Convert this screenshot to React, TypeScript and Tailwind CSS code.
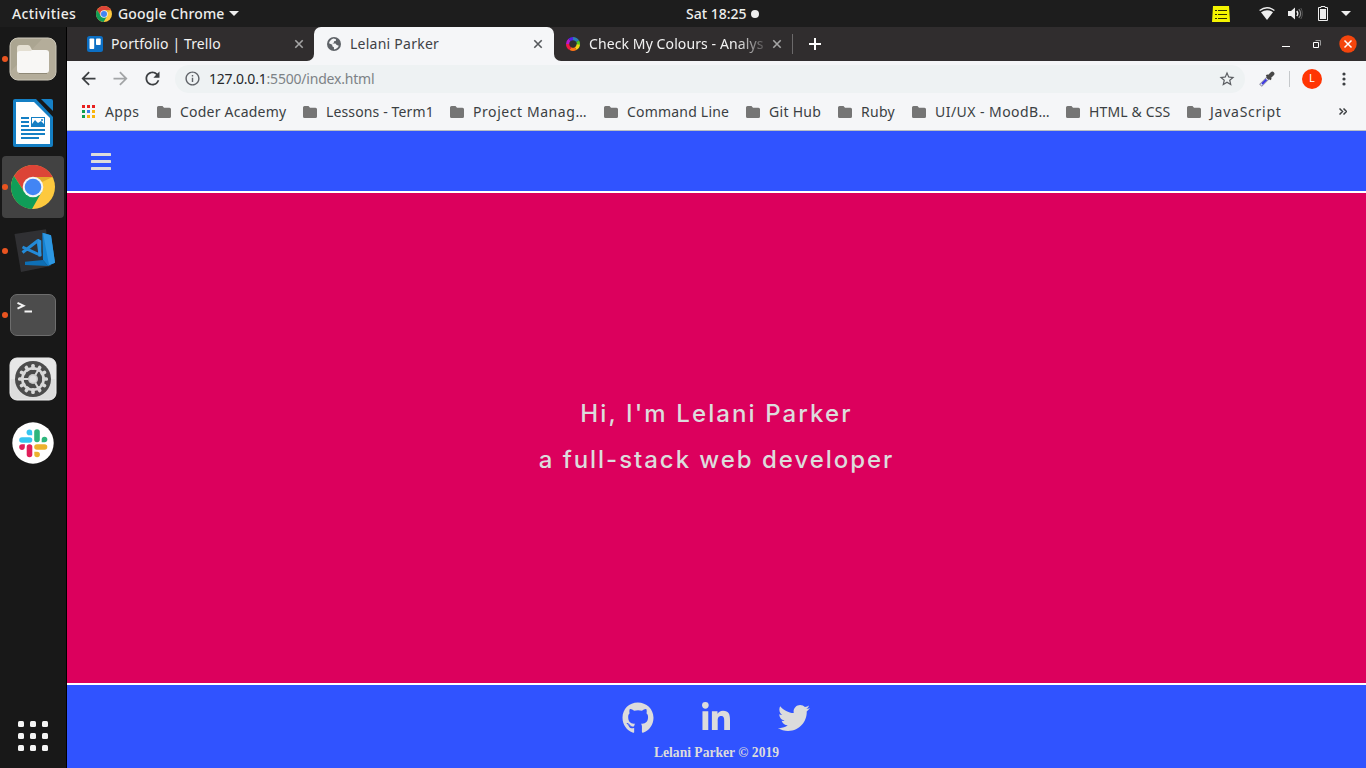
import React from "react";
import { FaGithub, FaLinkedinIn, FaTwitter } from "react-icons/fa";
import { MdArrowBack, MdArrowForward, MdRefresh, MdInfoOutline, MdStarBorder } from "react-icons/md";

function ChromeLogo({ className }: { className: string }) {
  return (
    <svg viewBox="2 2 44 44" className={className}>
      <circle cx="24" cy="24" r="22" fill="#fdc93e" />
      <path d="M24 14H43.7A22 22 0 0 0 4.95 13L15.34 29L24 24Z" fill="#dc4437" />
      <path d="M4.95 13A22 22 0 0 0 23 46L32.66 29L24 24L15.34 29Z" fill="#109d58" />
      <path d="M24 14H43.7L33 19Z" fill="#e2a92c" />
      <circle cx="24" cy="24" r="10.3" fill="#f4f4f4" />
      <circle cx="24" cy="24" r="8.3" fill="#4285f4" />
    </svg>
  );
}

function FilesIcon() {
  return (
    <svg width="48" height="46" viewBox="0 0 48 46">
      <rect x="1" y="2" width="46" height="42" rx="8" fill="#b4ad9a" stroke="#cbc6b8" />
      <path d="M2 35V10Q2 3 9 3H33Z" fill="#aba591" />
      <path d="M8 32V12q0-3 3-3h8q2 0 3 3l1 2h14v6Z" fill="#e4dfd2" />
      <rect x="8" y="15" width="32" height="22" rx="3" fill="#f8f7f5" />
      <path d="M8 20q0-3 3-3h8l4-3h14q3 0 3 3v10H8Z" fill="#f8f7f5" />
      <path d="M10 37.5H38" stroke="#8f8977" />
    </svg>
  );
}

function WriterIcon() {
  return (
    <svg width="40" height="48" viewBox="0 0 40 48">
      <path d="M2 0H23L40 18V46q0 2-2 2H2q-2 0-2-2V2Q0 0 2 0Z" fill="#147fc4" />
      <path d="M3 3H21L37 19V45H3Z" fill="#fff" />
      <path d="M28 0H38q2 0 2 2V12Z" fill="#1681c7" />
      <path d="M8 19h8M8 23h8M8 27h8M8 31H32M8 35H32M8 39H26" stroke="#147fc4" strokeWidth="2" />
      <rect x="18.500" y="18.500" width="13" height="9" fill="#fff" stroke="#147fc4" />
      <path d="M19 27V25L22 21L25 24L28 22L31 25V27Z" fill="#147fc4" />
      <circle cx="29" cy="21" r="1" fill="#147fc4" />
    </svg>
  );
}

function CodeIcon() {
  return (
    <svg width="46" height="46" viewBox="0 0 46 46">
      <path d="M4.500 6L36 1.300L41 38L11 44Z" fill="#303033" />
      <path d="M12.500 24.500L28 12.500L30 27L12.500 19" fill="none" stroke="#2389d6" strokeWidth="3" strokeLinejoin="round" />
      <path d="M28 11L31.300 12.500V28L28.500 28.800Z" fill="#2a93df" />
      <path d="M15 33.700L33 32L38 38L15 37Z" fill="#0e6fb5" />
      <path d="M32.300 4.700L41 7.300L45 34.700L38 38L33 32Z" fill="#1582d1" />
      <path d="M33 5L41 7.300L45 34.700L39 37Z" fill="#2d97e2" />
    </svg>
  );
}

function SettingsIcon() {
  const teeth = [0, 30, 60, 90, 120, 150, 180, 210, 240, 270, 300, 330];
  return (
    <svg width="48" height="46" viewBox="0 0 48 46">
      <rect x="1" y="2" width="46" height="42" rx="7" fill="#dcdcdc" stroke="#efefef" />
      <path d="M1.500 9q0-6 7-6.500h31q7 .5 7 6.500v14h-45Z" fill="#e7e7e7" />
      <circle cx="24" cy="23" r="18" fill="#4b4b4b" />
      {teeth.map((a) => (
        <rect key={a} x="22.200" y="8" width="3.600" height="6" rx="1.500" fill="#d8d8d8" transform={`rotate(${a} 24 23)`} />
      ))}
      <circle cx="24" cy="23" r="10.700" fill="none" stroke="#d8d8d8" strokeWidth="2.600" />
      <path d="M24 23H14.500M24 23L29 14.500M24 23L29 31.500" stroke="#d8d8d8" strokeWidth="2" />
      <circle cx="24" cy="23" r="5" fill="#c9c9c9" />
      <circle cx="24" cy="23" r="3.500" fill="#dedede" />
    </svg>
  );
}

function SlackIcon() {
  return (
    <svg width="42" height="42" viewBox="0 0 42 42">
      <circle cx="21" cy="21" r="20.700" fill="#fff" />
      <g strokeLinecap="round" strokeWidth="5.600" fill="none">
        <path d="M10 18H17.500" stroke="#36c5f0" />
        <path d="M25 10V17.500" stroke="#2eb67d" />
        <path d="M32.500 25H25" stroke="#ecb22e" />
        <path d="M17.500 32.500V25" stroke="#e01e5a" />
      </g>
      <path d="M20.200 13.200H17.400A2.800 2.800 0 1 1 20.200 10.400Z" fill="#36c5f0" />
      <path d="M29.700 20.300V17.500A2.800 2.800 0 1 1 32.500 20.300Z" fill="#2eb67d" />
      <path d="M22.300 29.700H25.100A2.800 2.800 0 1 1 22.300 32.500Z" fill="#ecb22e" />
      <path d="M12.800 22.300V25.100A2.800 2.800 0 1 1 10 22.300Z" fill="#e01e5a" />
    </svg>
  );
}

function TerminalIcon() {
  return (
    <svg width="48" height="46" viewBox="0 0 48 46">
      <rect x="1.500" y="2.500" width="45" height="41" rx="6.500" fill="#4c4c4c" stroke="#6d6d6d" />
      <path d="M8.500 10.800L14.500 13.700L8.500 16.600M15.500 19.500H23" fill="none" stroke="#f4f4f4" strokeWidth="2" />
    </svg>
  );
}

function DockSlot({ running, active, children }: { running?: boolean; active?: boolean; children: React.ReactNode }) {
  return (
    <div className="flex h-16 w-[66px] items-center">
      <div className={active ? "flex h-[62px] w-[62px] ml-[2px] items-center rounded bg-[#424242]" : "flex h-[62px] w-[62px] ml-[2px] items-center"}>
        <span className={running ? "h-[6px] w-[6px] shrink-0 rounded-full bg-[#e95420]" : "h-[6px] w-[6px] shrink-0"} />
        <span className="flex w-[50px] shrink-0 justify-center">{children}</span>
      </div>
    </div>
  );
}

function CloseX({ className }: { className: string }) {
  return (
    <svg width="10" height="10" viewBox="0 0 10 10" className={className}>
      <path d="M1.300 1.300L8.700 8.700M8.700 1.300L1.300 8.700" stroke="currentColor" strokeWidth="1.600" />
    </svg>
  );
}

function Bookmark({ width, tracking, children }: { width: string; tracking: string; children: React.ReactNode }) {
  return (
    <div className={`flex shrink-0 items-center gap-[9px] ${width}`}>
      <svg width="14" height="12" viewBox="0 0 14 12" className="shrink-0">
        <path d="M1.500 0H5.500L7 1.700H12.500Q14 1.700 14 3.200V10.500Q14 12 12.500 12H1.500Q0 12 0 10.500V1.500Q0 0 1.500 0Z" fill="#757575" />
      </svg>
      <span className={`whitespace-nowrap ${tracking}`}>{children}</span>
    </div>
  );
}

function TopBar() {
  return (
    <header className="flex h-[27px] shrink-0 items-center bg-[#1d1d1d] text-[14px] font-medium text-[#eeeeec]">
      <span className="ml-3 w-[84px] whitespace-nowrap tracking-[0.4px]">Activities</span>
      <ChromeLogo className="h-4 w-4 shrink-0" />
      <span className="ml-[6px] w-[111px] whitespace-nowrap tracking-[0.15px]">Google Chrome</span>
      <svg width="10" height="5" viewBox="0 0 10 5"><path d="M0 0H10L5 5Z" fill="#eee" /></svg>
      <span className="ml-[447px] w-[65px] whitespace-nowrap">Sat 18:25</span>
      <span className="h-2 w-2 rounded-full bg-[#eee]" />
      <svg width="18" height="16" viewBox="0 0 18 16" className="ml-[453px]">
        <path d="M1 0H17L18 16H0Z" fill="#f5f500" />
        <path d="M3 4.500H5M6 4.500H15M3 8.500H5M6 8.500H15M3 12.500H5M6 12.500H15" stroke="#303000" strokeWidth="1.200" />
      </svg>
      <svg width="16" height="13" viewBox="0 0 16 13" className="ml-[29px]">
        <path d="M.6 3.500Q8-2 15.400 3.500" fill="none" stroke="#eee" strokeWidth="1.300" />
        <path d="M2 5.200Q8 1.300 14 5.200L8 13Z" fill="#eee" />
      </svg>
      <svg width="15" height="13" viewBox="0 0 15 13" className="ml-[13px]" fill="none">
        <path d="M0 4H3L7 .5V12.500L3 9H0Z" fill="#eee" />
        <path d="M8.800 4Q10.800 6.500 8.800 9" stroke="#eee" strokeWidth="1.400" />
        <path d="M10.800 2.200Q14.500 6.500 10.800 10.800" stroke="#888" strokeWidth="1.200" />
        <path d="M12.800 1Q16 6.500 12.800 12" stroke="#555" />
      </svg>
      <svg width="10" height="15" viewBox="0 0 10 15" className="ml-[15px]">
        <path d="M3 .5H7V1.500H9.500V14.500H.5V1.500H3Z" fill="none" stroke="#eee" />
        <path d="M2 3H8V13H2Z" fill="#eee" />
      </svg>
      <svg width="10" height="5" viewBox="0 0 10 5" className="ml-[13px]"><path d="M0 0H10L5 5Z" fill="#eee" /></svg>
    </header>
  );
}

function Dock() {
  return (
    <aside className="flex w-[67px] shrink-0 flex-col border-r border-black bg-[#181818]">
      <DockSlot running><FilesIcon /></DockSlot>
      <DockSlot><WriterIcon /></DockSlot>
      <DockSlot running active><ChromeLogo className="h-11 w-11" /></DockSlot>
      <DockSlot running><CodeIcon /></DockSlot>
      <DockSlot running><TerminalIcon /></DockSlot>
      <DockSlot><SettingsIcon /></DockSlot>
      <DockSlot><SlackIcon /></DockSlot>
      <div className="mt-auto mb-[17px] ml-[18px] grid w-[30px] grid-cols-3 gap-[6px]">
        {[0, 1, 2, 3, 4, 5, 6, 7, 8].map((i) => (
          <span key={i} className="h-[6px] w-[6px] rounded-[1.5px] bg-[#f4f4f4]" />
        ))}
      </div>
    </aside>
  );
}

function TabStrip() {
  return (
    <div className="flex h-[34px] shrink-0 bg-[#f5f6f8] text-[14px] text-[#f2f2f2]">
      <div className="flex w-[247px] items-center rounded-br-[7px] bg-[#302d2e]">
        <svg width="16" height="16" viewBox="0 0 16 16" className="ml-5 shrink-0">
          <rect width="16" height="16" rx="2.500" fill="#0c6fc4" />
          <rect x="2.500" y="2.500" width="4.700" height="10.500" rx=".8" fill="#fff" />
          <rect x="9" y="2.500" width="4.700" height="6.500" rx=".8" fill="#fff" />
        </svg>
        <span className="ml-2 w-[183px] pb-[2px] whitespace-nowrap tracking-[0.1px]">Portfolio | Trello</span>
        <CloseX className="shrink-0 text-[#a5a5a5]" />
      </div>
      <div className="w-[240px] bg-[#302d2e]">
        <div className="flex h-full items-center rounded-t-[7px] bg-[#f5f6f8] text-[#3f4246]">
          <svg width="14" height="14" viewBox="0 0 14 14" className="ml-[13px] shrink-0">
            <circle cx="7" cy="7" r="7" fill="#5f6368" />
            <path d="M6.500 1.600L9 2.200L8.800 4L7 4.300V5.600L5.300 6.500H8.500L9.700 8L11.800 8.700Q10.500 12 7 12.400L6.900 10.300L5.300 9.200V7.800L2 6.300Q2.500 3 6.500 1.600Z" fill="#f5f6f8" />
            <path d="M9.800 3L12.300 7L10.500 6.500L9 5.400Z" fill="#5f6368" />
          </svg>
          <span className="ml-[9px] w-[183px] pb-[2px] whitespace-nowrap tracking-[0.25px]">Lelani Parker</span>
          <CloseX className="shrink-0 text-[#55585c]" />
        </div>
      </div>
      <div className="flex flex-1 items-center rounded-bl-[7px] bg-[#302d2e]">
        <svg width="16" height="16" viewBox="0 0 16 16" className="ml-[11px] shrink-0" fill="none" strokeWidth="3.200">
          <path d="M8 2.600A5.400 5.400 0 0 1 12.700 5.300" stroke="#2b7fb0" />
          <path d="M12.700 5.300A5.400 5.400 0 0 1 12.700 10.700" stroke="#55c626" />
          <path d="M13.300 8.500A5.400 5.400 0 0 1 10.700 12.700" stroke="#f3d315" />
          <path d="M10.700 12.700A5.400 5.400 0 0 1 5.300 12.700" stroke="#ff7417" />
          <path d="M5.300 12.700A5.400 5.400 0 0 1 2.600 8" stroke="#f01845" />
          <path d="M2.600 8A5.400 5.400 0 0 1 4.500 3.900" stroke="#b41ad0" />
          <path d="M4.500 3.900A5.400 5.400 0 0 1 8 2.600" stroke="#5420e8" />
        </svg>
        <span className="ml-2 w-[175px] shrink-0 pb-[2px] whitespace-nowrap tracking-[0.1px] [mask-image:linear-gradient(to_right,black_84%,transparent_104%)]">Check My Colours - Analys</span>
        <CloseX className="ml-[8px] shrink-0 text-[#a5a5a5]" />
        <span className="ml-[10px] h-5 w-px bg-[#6b696a]" />
        <svg width="12" height="12" viewBox="0 0 12 12" className="ml-4"><path d="M6 0V12M0 6H12" stroke="#fff" strokeWidth="2" /></svg>
        <svg width="8" height="8" viewBox="0 0 8 8" className="ml-[461px]"><path d="M0 6.500H8" stroke="#fff" /></svg>
        <svg width="8" height="8" viewBox="0 0 8 8" className="ml-[23px]" fill="none">
          <path d="M2.500 .5H7.500V5.500" stroke="#999" />
          <path d="M.5 2.500H5.500V7.500H.5Z" stroke="#fff" />
        </svg>
        <svg width="18" height="18" viewBox="0 0 18 18" className="ml-[18px]">
          <circle cx="9" cy="9" r="8.700" fill="#f4450d" />
          <path d="M5.500 5.500L12.500 12.500M12.500 5.500L5.500 12.500" stroke="#fff" strokeWidth="1.500" />
        </svg>
      </div>
    </div>
  );
}

function Toolbar() {
  return (
    <div className="flex h-[35px] shrink-0 items-center">
      <MdArrowBack className="ml-[11px] text-[21px] text-[#3c3f42]" />
      <MdArrowForward className="ml-[11px] text-[21px] text-[#a2a4a6]" />
      <MdRefresh className="ml-[11px] text-[21px] text-[#3c3f42]" />
      <div className="ml-[12px] flex h-7 w-[1070px] items-center rounded-full bg-[#eef2f3] text-[14px]">
        <MdInfoOutline className="ml-[9px] text-[17px] text-[#5f6368]" />
        <span className="ml-[8px] flex-1 whitespace-nowrap tracking-[-0.2px] text-[#7d8286]"><span className="text-[#25282b]">127.0.0.1</span>:5500/index.html</span>
        <MdStarBorder className="mr-[9px] text-[18px] text-[#5a5d61]" />
      </div>
      <svg width="16" height="16" viewBox="0 0 16 16" className="ml-[14px]">
        <path d="M1.500 14.500L9.500 6.500" stroke="#85859a" strokeWidth="3.800" />
        <path d="M2 14L9.500 6.500" stroke="#e4e5fa" strokeWidth="2.200" />
        <path d="M3 13L7.500 8.500" stroke="#3a36e0" strokeWidth="2" />
        <path d="M7.500 4L12 8.500" stroke="#3a3a3a" strokeWidth="2" />
        <path d="M9.700 6.300L13.300 2.700" stroke="#484848" strokeWidth="4.200" strokeLinecap="round" />
      </svg>
      <span className="ml-[14px] h-4 w-px bg-[#c5c8cb]" />
      <span className="ml-[12px] flex h-5 w-5 items-center justify-center rounded-full bg-[#ff3503] text-[11px] text-white">L</span>
      <svg width="4" height="14" viewBox="0 0 4 14" className="ml-[20px]" fill="#3c3f42">
        <circle cx="2" cy="2" r="1.600" /><circle cx="2" cy="7" r="1.600" /><circle cx="2" cy="12" r="1.600" />
      </svg>
    </div>
  );
}

function Bookmarks() {
  const colors = ["fill-[#e8201f]", "fill-[#e8201f]", "fill-[#e8201f]", "fill-[#10a050]", "fill-[#3b7ff0]", "fill-[#f9b50c]", "fill-[#10a050]", "fill-[#f9b50c]", "fill-[#f9b50c]"];
  return (
    <div className="flex h-[35px] shrink-0 items-center border-b border-[#b9bec4] pb-[3px] text-[14px] text-[#3b3f43]">
      <svg width="13" height="13" viewBox="0 0 13 13" className="ml-[15px] shrink-0">
        {colors.map((c, i) => (
          <rect key={i} x={(i % 3) * 5} y={Math.floor(i / 3) * 5} width="3" height="3" className={c} />
        ))}
      </svg>
      <span className="ml-[10px] w-[52px] shrink-0 tracking-[0.4px]">Apps</span>
      <Bookmark width="w-[146px]" tracking="tracking-[0.22px]">Coder Academy</Bookmark>
      <Bookmark width="w-[147px]" tracking="tracking-[0.13px]">Lessons - Term1</Bookmark>
      <Bookmark width="w-[154px]" tracking="tracking-[0.57px]">Project Manag…</Bookmark>
      <Bookmark width="w-[142px]" tracking="tracking-[0.2px]">Command Line</Bookmark>
      <Bookmark width="w-[92px]" tracking="tracking-[0.3px]">Git Hub</Bookmark>
      <Bookmark width="w-[74px]" tracking="tracking-[0.3px]">Ruby</Bookmark>
      <Bookmark width="w-[154px]" tracking="tracking-[0.45px]">UI/UX - MoodB…</Bookmark>
      <Bookmark width="w-[121px]" tracking="tracking-[0.15px]">HTML &amp; CSS</Bookmark>
      <Bookmark width="w-[152px]" tracking="tracking-[0.75px]">JavaScript</Bookmark>
      <svg width="8" height="7" viewBox="0 0 8 7" className="shrink-0"><path d="M.5 .5L3.500 3.500L.5 6.500M4.500 .5L7.500 3.500L4.500 6.500" fill="none" stroke="#3c3f42" strokeWidth="1.500" /></svg>
    </div>
  );
}

export default function App() {
  return (
    <div className="flex h-[768px] w-[1366px] flex-col overflow-hidden font-['Noto_Sans',sans-serif]">
      <TopBar />
      <div className="flex min-h-0 flex-1">
        <Dock />
        <div className="flex w-[1299px] flex-col bg-[#f5f6f8]">
          <TabStrip />
          <Toolbar />
          <Bookmarks />
          <nav className="flex h-[60px] shrink-0 items-center bg-[#3053ff] pl-6">
            <svg width="20" height="17" viewBox="0 0 20 17" fill="#dcdcdc">
              <rect width="20" height="3" rx=".6" /><rect y="7" width="20" height="3" rx=".6" /><rect y="14" width="20" height="3" rx=".6" />
            </svg>
          </nav>
          <main className="flex flex-1 flex-col items-center justify-center border-y-2 border-white bg-[#dc005d] pb-[2px] font-['Inter',sans-serif] text-[24px] leading-[46px] font-medium text-[#dcdcdc]">
            <p className="tracking-[2.1px]">Hi, I'm Lelani Parker</p>
            <p className="tracking-[1.95px]">a full-stack web developer</p>
          </main>
          <footer className="flex h-[83px] shrink-0 flex-col items-center bg-[#3053ff] pt-[17px] text-[#dcdcdc]">
            <div className="flex items-center gap-[46px] pr-px text-[32px]">
              <FaGithub />
              <FaLinkedinIn />
              <FaTwitter />
            </div>
            <p className="mt-[11px] font-['Liberation_Serif',serif] text-[13.6px] leading-4 font-bold">Lelani Parker © 2019</p>
          </footer>
        </div>
      </div>
    </div>
  );
}
